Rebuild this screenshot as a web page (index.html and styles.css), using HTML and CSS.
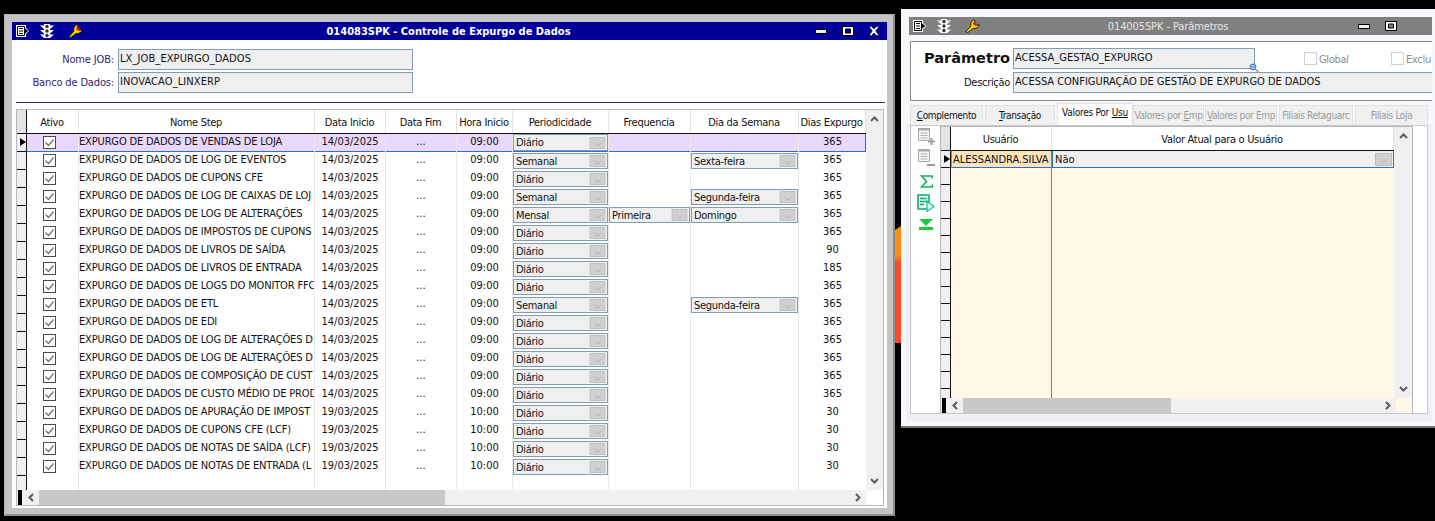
FILE: index.html
```html
<!DOCTYPE html>
<html lang="pt-BR">
<head>
<meta charset="utf-8">
<title>Expurgo de Dados</title>
<link rel="stylesheet" href="styles.css">
</head>
<body>
<svg class="defs" width="0" height="0" aria-hidden="true">
  <defs>
    <symbol id="i-doc" viewBox="0 0 13 12">
      <path d="M0 0h10v3l3 3-3 3v3H0z" fill="#fff"/>
      <path d="M1.500 1.500h7v9h-7z" fill="#fff" stroke="#000"/>
      <path d="M3 3.500h4M3 6h4M3 8.500h4" stroke="#000" stroke-width="1.200"/>
      <path d="M8.500 3l3.700 3-3.700 3z" fill="#000"/>
    </symbol>
    <symbol id="i-light" viewBox="0 0 14 14">
      <path d="M4 0h6v14H4z" fill="#fff"/>
      <path d="M0 1.500h4v3.500zM14 1.500h-4v3.500zM0 6h4v3.500zM14 6h-4v3.500zM0 10.500h4V14zM14 10.500h-4V14z" fill="#fff"/>
      <circle cx="7" cy="2.500" r="1.700" fill="#333"/><circle cx="7" cy="7" r="1.700" fill="#333"/><circle cx="7" cy="11.500" r="1.700" fill="#333"/>
    </symbol>
    <symbol id="i-key" viewBox="0 0 15 14">
      <path d="M.8 12.800L5.900 7.200C5.200 5 6.200 2 8.500.8L10 1.600 8.900 4.600 11 6.300 14.300 5.700C13.600 8.500 10.800 10 8 9.400L2.800 13.500z" fill="#ffd400" stroke="#1a1a00" stroke-width=".9"/>
      <circle cx="10" cy="4.800" r="1.700" fill="#e3141e"/>
    </symbol>
    <symbol id="i-min" viewBox="0 0 12 5"><path d="M.5.5h11v4H.5z" fill="#eee" stroke="#000"/></symbol>
    <symbol id="i-max" viewBox="0 0 12 10"><path fill-rule="evenodd" d="M.5.500h11v9H.5zM3.500 3h5v4h-5z" fill="#fff" stroke="#000"/></symbol>
    <symbol id="i-close" viewBox="0 0 12 10"><path d="M1 .5h2.500L6 3l2.500-2.500H11L7.700 5 11 9.500H8.500L6 7 3.500 9.500H1L4.300 5z" fill="#fff" stroke="#000" stroke-width=".6"/></symbol>
    <symbol id="i-drop" viewBox="0 0 17 13"><rect x=".5" y=".5" width="16" height="12" fill="#d0d0d0" stroke="#bdbdbd"/><path d="M5 6.500l3.500 3.500L12 6.500" fill="none" stroke="#aeaeae"/></symbol>
    <symbol id="i-check" viewBox="0 0 13 13"><rect x=".5" y=".5" width="12" height="12" fill="#fff" stroke="#4a4a4a"/><path d="M2.500 6.500l3 3 5-6" fill="none" stroke="#707070" stroke-width="1.200"/></symbol>
    <symbol id="i-up" viewBox="0 0 9 6"><path d="M1 5l3.500-3.500L8 5" fill="none" stroke="#5c5c5c" stroke-width="2"/></symbol>
    <symbol id="i-dn" viewBox="0 0 9 6"><path d="M1 1l3.500 3.500L8 1" fill="none" stroke="#5c5c5c" stroke-width="2"/></symbol>
    <symbol id="i-lf" viewBox="0 0 6 9"><path d="M5 1L1.500 4.500 5 8" fill="none" stroke="#5c5c5c" stroke-width="2"/></symbol>
    <symbol id="i-rt" viewBox="0 0 6 9"><path d="M1 1l3.500 3.500L1 8" fill="none" stroke="#5c5c5c" stroke-width="2"/></symbol>
  </defs>
</svg>

<section class="win win-left">
  <header class="title title-on">
    <div class="title-icons">
      <svg class="ti-doc"><use href="#i-doc"/></svg>
      <svg class="ti-light"><use href="#i-light"/></svg>
      <svg class="ti-key"><use href="#i-key"/></svg>
    </div>
    <div class="title-text">014083SPK - Controle de Expurgo de Dados</div>
    <div class="title-btns">
      <svg class="tb-min"><use href="#i-min"/></svg>
      <svg class="tb"><use href="#i-max"/></svg>
      <svg class="tb"><use href="#i-close"/></svg>
    </div>
  </header>
  <div class="win-body">
    <div class="form">
      <div class="form-row"><label class="form-label">Nome JOB:</label><div class="field">LX_JOB_EXPURGO_DADOS</div></div>
      <div class="form-row"><label class="form-label">Banco de Dados:</label><div class="field">INOVACAO_LINXERP</div></div>
    </div>
    <div class="rule"></div>
    <div class="grid-box left-grid">
      <div class="grid-main">
        <div class="gutter" id="gutter-l"></div>
        <div class="grid-cols">
          <div class="g-head">
            <div class="c c-ativo">Ativo</div><div class="c c-nome">Nome Step</div><div class="c c-ini">Data Inicio</div><div class="c c-fim">Data Fim</div><div class="c c-hora">Hora Inicio</div><div class="c c-per">Periodicidade</div><div class="c c-freq">Frequencia</div><div class="c c-dia">Dia da Semana</div><div class="c c-exp">Dias Expurgo</div>
          </div>
          <div class="g-rows" id="rows"></div>
        </div>
        <div class="vbar"><svg class="chev-v"><use href="#i-up"/></svg><svg class="chev-v"><use href="#i-dn"/></svg></div>
      </div>
      <div class="hbar">
        <i class="hbar-mark"></i>
        <span class="hchev"><svg class="chev-h"><use href="#i-lf"/></svg></span>
        <div class="hthumb left-thumb"></div>
        <span class="hspace"></span>
        <span class="hchev"><svg class="chev-h"><use href="#i-rt"/></svg></span>
        <i class="corner corner-l"></i>
      </div>
    </div>
  </div>
</section>

<section class="win win-right">
  <header class="title title-off">
    <div class="title-icons">
      <svg class="ti-doc"><use href="#i-doc"/></svg>
      <svg class="ti-light"><use href="#i-light"/></svg>
      <svg class="ti-key"><use href="#i-key"/></svg>
    </div>
    <div class="title-text">014005SPK - Parâmetros</div>
    <div class="title-btns btns-r">
      <svg class="tb-min"><use href="#i-min"/></svg>
      <svg class="tb"><use href="#i-max"/></svg>
    </div>
  </header>
  <div class="group">
    <div class="g-line">
      <div class="g-big">Parâmetro</div>
      <div class="field2 f-short">ACESSA_GESTAO_EXPURGO<svg class="lens" viewBox="0 0 10 10"><circle cx="4" cy="4" r="3" fill="#8fb6e8" stroke="#4a78b5"/><path d="M6 6l3.500 3" stroke="#b59a4a" stroke-width="1.600"/></svg></div>
      <div class="chk"><i class="box"></i><span>Global</span></div>
      <div class="chk"><i class="box"></i><span>Exclu</span></div>
    </div>
    <div class="g-line">
      <div class="g-desc">Descrição</div>
      <div class="field2 f-long">ACESSA CONFIGURAÇÃO DE GESTÃO DE EXPURGO DE DADOS</div>
    </div>
  </div>
  <nav class="tabs">
    <div class="tab t1"><u>C</u>omplemento</div>
    <div class="tab t2"><u>T</u>ransação</div>
    <div class="tab t3 active">Valores Por <u>Usu</u></div>
    <div class="tab t4 dim">Valores por <u>E</u>mp</div>
    <div class="tab t5 dim"><u>V</u>alores por Emp</div>
    <div class="tab t6 dim">Filiais Retaguarc</div>
    <div class="tab t7 dim">Filiais Loja</div>
  </nav>
  <div class="tab-page">
    <div class="side">
      <svg class="si s-add" viewBox="0 0 17 17"><path d="M.5.5h11v12H.5z" fill="#f4f4f4" stroke="#a8a8a8"/><path d="M.5 1.500h11" stroke="#a8a8a8" stroke-width="2"/><path d="M2.500 5h7M2.500 7.500h7M2.500 10h7" stroke="#b4b4b4"/><path d="M10 13.500h7M13.500 10v7" stroke="#a0a0a0" stroke-width="2"/></svg>
      <svg class="si s-del" viewBox="0 0 17 18"><path d="M.5.5h11v12H.5z" fill="#f4f4f4" stroke="#a8a8a8"/><path d="M.5 1.500h11" stroke="#a8a8a8" stroke-width="2"/><path d="M2.500 5h7M2.500 7.500h7M2.500 10h7" stroke="#b4b4b4"/><path d="M9 16h8" stroke="#9a9a9a" stroke-width="2"/></svg>
      <svg class="si s-sum" viewBox="0 0 13 13"><path d="M12.300 3.500V1H1.500l5 5.500-5 5.500h10.800V9.500" fill="none" stroke="#0fb45a" stroke-width="1.600"/></svg>
      <svg class="si s-run" viewBox="0 0 18 18"><path d="M1 1h11v14H1z" fill="#e4fff2" stroke="#16a86e" stroke-width="1.600"/><path d="M3 4.500h7M3 7.500h7M3 10.500h4" stroke="#16a86e" stroke-width="1.300"/><path d="M10 7l7 5.500-7 5z" fill="#d8fff0" stroke="#22bb88" stroke-width="1.200"/></svg>
      <svg class="si s-down" viewBox="0 0 14 11"><path d="M0 0h14L7 7z" fill="#1ecb3a"/><path d="M0 8h14v3H0z" fill="#1ecb3a"/></svg>
    </div>
    <div class="grid-box right-grid">
      <div class="grid-main">
        <div class="gutter" id="gutter-r"></div>
        <div class="grid-cols">
          <div class="g-head">
            <div class="c c-usr">Usuário</div><div class="c c-val">Valor Atual para o Usuário</div>
          </div>
          <div class="g-rows cream">
            <div class="row-r">
              <div class="c c-usr cell-usr">ALESSANDRA.SILVA</div>
              <div class="c c-val cell-val"><span class="val-text">Não</span><svg class="dd"><use href="#i-drop"/></svg></div>
            </div>
            <div class="fill-r"><i class="c-usr"></i></div>
          </div>
        </div>
        <div class="vbar"><svg class="chev-v"><use href="#i-up"/></svg><svg class="chev-v"><use href="#i-dn"/></svg></div>
      </div>
      <div class="hbar">
        <i class="hbar-mark"></i>
        <span class="hchev"><svg class="chev-h"><use href="#i-lf"/></svg></span>
        <div class="hthumb right-thumb"></div>
        <span class="hspace"></span>
        <span class="hchev"><svg class="chev-h"><use href="#i-rt"/></svg></span>
        <i class="corner corner-r"></i>
      </div>
    </div>
  </div>
</section>

<div class="sliver"></div>

<script src="app.js"></script>
</body>
</html>
```

FILE: styles.css
```css
* { box-sizing: border-box; }
html, body { margin: 0; height: 100%; }
body { background: #000; overflow: hidden; position: relative; font: 11px/13px "DejaVu Sans", sans-serif; font-stretch: condensed; color: #111; }
.defs { position: absolute; }

.win { position: absolute; display: flex; flex-direction: column; }
.win-left { left: 4px; top: 14px; width: 891px; height: 502px; padding: 7px 6px 6px 7px; background: #c4c4c4; border: 1px solid #b4b4b4; border-right: 2px solid #8d8d8d; border-bottom: 2px solid #8d8d8d; }
.win-right { left: 901px; top: 9px; width: 534px; height: 419px; padding: 8px 3px 0 8px; background: #f5f7fb; border-bottom: 2px solid #777; }

.title { flex: none; height: 18px; display: flex; align-items: center; position: relative; }
.title-on { background: #000099; color: #fff; font-weight: bold; line-height: 18px; }
.title-off { background: #808080; color: #e6e6e6; line-height: 18px; }
.title-icons { display: flex; align-items: center; padding-left: 4px; position: relative; z-index: 1; }
.ti-doc { width: 13px; height: 12px; flex: none; }
.ti-light { width: 14px; height: 14px; flex: none; margin-left: 11px; }
.ti-key { width: 15px; height: 14px; flex: none; margin-left: 14px; }
.title-text { position: absolute; left: 0; right: 0; top: 1px; padding-right: 2px; text-align: center; }
.title-off .title-text { padding-right: 5px; letter-spacing: -.1px; }
.title-btns { margin-left: auto; display: flex; align-items: center; gap: 14px; padding-right: 7px; position: relative; }
.btns-r { padding-right: 35px; }
.tb { width: 12px; height: 10px; flex: none; }
.tb-min { width: 12px; height: 5px; flex: none; margin-right: 1px; }

.win-body { flex: 1; background: #fff; display: flex; flex-direction: column; padding: 9px 2px 0 4px; min-height: 0; }
.form { display: flex; flex-direction: column; gap: 2px; flex: none; }
.form-row { display: flex; align-items: center; height: 21px; gap: 4px; }
.form-label { width: 98px; text-align: right; color: #35246e; letter-spacing: -.15px; white-space: nowrap; }
.field { width: 295px; height: 21px; background: #efefef; border: 1px solid #7f9db9; padding: 1px; color: #111; line-height: 15px; letter-spacing: .1px; }
.rule { margin-top: 9px; height: 1px; background: #3d1f78; flex: none; }

.grid-box { background: #fff; border: 1px solid #b8b8b8; display: flex; flex-direction: column; min-height: 0; }
.left-grid { margin-top: 6px; height: 397px; width: 868px; flex: none; }
.grid-main { flex: 1; display: flex; min-height: 0; }
.gutter { width: 10px; flex: none; background: #f0f0f0; border-right: 1px solid #111; display: flex; flex-direction: column; overflow: hidden; }
.gutter i { display: block; flex: none; height: 18px; border-bottom: 1px solid #111; position: relative; }
#gutter-r i { height: 17px; }
.gutter i.head, #gutter-r i.head { height: 24px; background: #e4e4e4; }
.gutter i.cur::after { content: ""; position: absolute; left: 3px; top: 4px; border-left: 6px solid #000; border-top: 4px solid transparent; border-bottom: 4px solid transparent; }
.grid-cols { flex: 1; min-width: 0; display: flex; flex-direction: column; }
.g-head { display: flex; height: 23px; flex: none; text-align: center; letter-spacing: -.3px; }
.g-head .c { line-height: 25px; padding-right: 1px; border-right: 1px solid #e2e2e2; white-space: nowrap; overflow: hidden; }
.g-rows { flex: 1; min-height: 0; border-top: 1px solid #111; position: relative; display: flex; flex-direction: column; }
.c { flex: none; }
.c-ativo { width: 52px; }
.c-nome { width: 236px; }
.c-ini { width: 71px; }
.c-fim { width: 71px; }
.c-hora { width: 56px; }
.c-per { width: 96px; }
.c-freq { width: 82px; }
.c-dia { width: 108px; }
.c-exp { width: 67px; }

.row { display: flex; height: 18px; flex: none; }
.row .c { border-right: 1px solid #e8e8e8; height: 18px; line-height: 15px; white-space: nowrap; overflow: hidden; text-align: center; }
.row .c.c-nome { text-align: left; letter-spacing: -.15px; }
.row .c.c-exp { border-right: 0; }
.row.sel { background: #e9d8fc; box-shadow: inset -1px -1px 0 #2a73c4; }
.row .c-ativo svg { width: 13px; height: 13px; margin: 2px 0 0 16px; display: block; }
.fill { flex: 1; display: flex; }
.fill i { display: block; height: 100%; border-right: 1px solid #e8e8e8; }
.combo { display: flex; align-items: center; justify-content: space-between; height: 16px; margin-top: 1px; background: #efefef; border: 1px solid #7f9db9; padding: 0 1px 0 2px; text-align: left; letter-spacing: -.3px; }
.sel .combo { margin-top: 0; height: 17px; }
.combo svg, .dd { width: 17px; height: 12px; flex: none; }
.right-grid .dd { height: 13px; }

.vbar { width: 17px; flex: none; background: #f0f0f0; display: flex; flex-direction: column; justify-content: space-between; align-items: center; padding: 6px 0; }
.right-grid .vbar { width: 18px; }
.chev-v { width: 9px; height: 6px; display: block; }
.chev-h { width: 6px; height: 9px; display: block; }
.hbar { flex: none; height: 15px; display: flex; align-items: stretch; background: #f0f0f0; }
.hbar-mark { width: 4px; margin-left: 1px; flex: none; background: #000; }
.hchev { width: 17px; flex: none; display: flex; align-items: center; justify-content: center; }
.hspace { flex: 1; }
.hthumb { background: #c8c8c8; flex: none; }
.left-thumb { width: 406px; }
.right-thumb { width: 208px; }
.corner { flex: none; display: block; }
.corner-l { width: 17px; background: #fff; }
.corner-r { width: 16px; background: #fff8e8; }

.group { flex: none; height: 60px; margin: 6px 0 0 1px; border: 1px solid #8a8a8a; border-right: 0; padding-top: 6px; display: flex; flex-direction: column; gap: 3px; background: #fff; overflow: hidden; }
.g-line { display: flex; align-items: center; height: 21px; }
.g-big { width: 102px; flex: none; text-align: right; padding-right: 3px; font: bold 14.500px/21px "DejaVu Sans", sans-serif; font-stretch: normal; }
.g-desc { width: 102px; flex: none; text-align: right; padding-right: 3px; letter-spacing: -.3px; }
.field2 { border: 1px solid #7f9db9; background: #efefef; padding: 1px; height: 21px; flex: none; position: relative; line-height: 15px; }
.f-short { width: 242px; }
.f-long { flex: 1; border-right: 0; letter-spacing: -.03px; }
.lens { position: absolute; right: -5px; bottom: -5px; width: 10px; height: 10px; }
.chk { display: flex; align-items: center; gap: 2px; color: #8a8a8a; width: 87px; flex: none; letter-spacing: -.3px; }
.chk span { padding-top: 2px; }
.f-short + .chk { margin-left: 49px; }
.box { display: block; width: 13px; height: 13px; background: #fff; border: 1px solid #cfcfcf; flex: none; }

.tabs { flex: none; display: flex; height: 22px; margin: 2px 0 0 1px; align-items: flex-end; position: relative; z-index: 1; }
.tab { flex: none; height: 20px; background: #f0f0f0; border: 1px solid #e2e2e2; border-bottom: 0; text-align: center; line-height: 19px; font-size: 10px; letter-spacing: -.35px; white-space: nowrap; overflow: hidden; }
.tab.active { height: 22px; background: #fff; line-height: 17px; letter-spacing: -.25px; }
.tab.dim { color: #9a9a9a; }
.t1 { width: 73px; }
.t2 { width: 70px; margin-left: 2px; }
.t3 { width: 76px; margin-left: 2px; }
.t4 { width: 71px; }
.t5 { width: 72px; margin-left: 1px; }
.t6 { width: 74px; margin-left: 2px; }
.t7 { width: 73px; margin-left: 2px; }

.tab-page { flex: 1; display: flex; min-height: 0; background: #fff; border: 1px solid #c8c8c8; margin: 0 4px 12px 1px; box-shadow: 0 3px 0 4px #eff0f5; }
.side { width: 29px; flex: none; display: flex; flex-direction: column; align-items: flex-start; padding: 2px 0 0 7px; }
.si { display: block; flex: none; }
.s-add { width: 17px; height: 17px; }
.s-del { width: 17px; height: 18px; margin-top: 4px; }
.s-sum { width: 13px; height: 13px; margin: 8px 0 0 2px; }
.s-run { width: 18px; height: 18px; margin: 6px 0 0 -1px; }
.s-down { width: 14px; height: 11px; margin: 7px 0 0 1px; }
.right-grid { width: 473px; flex: none; border-bottom: 0; }
.c-usr { width: 101px; display: block; }
.c-val { width: 342px; }
.row-r { display: flex; height: 17px; flex: none; }
.cream { background: #fff8e8; }
.cell-usr { background: #fbe3bb; border-right: 1px solid #7d7d7d; border-left: 1px solid #6d9ac8; border-bottom: 1px solid #2a73c4; line-height: 17px; padding-left: 1px; white-space: nowrap; overflow: hidden; }
.cell-val { background: #efefef; display: flex; justify-content: space-between; align-items: center; padding: 0 1px 0 2px; border: 1px solid #2a73c4; border-top: 0; }
.val-text { padding-top: 1px; }
.fill-r { flex: 1; }
.fill-r i { display: block; height: 100%; border-right: 1px solid #7d7d7d; }

.sliver { position: absolute; left: 895px; top: 226px; width: 6px; height: 117px; background: linear-gradient(168deg, #ff8c14 0, #ff8c14 30px, #ff4a28 36px); clip-path: polygon(0 4px, 100% 0, 100% 100%, 0 100%); }
```

FILE: app.js
```js
var data = [
  ["EXPURGO DE DADOS DE VENDAS DE LOJA","14/03/2025","09:00","Diário","","","365"],
  ["EXPURGO DE DADOS DE LOG DE EVENTOS","14/03/2025","09:00","Semanal","","Sexta-feira","365"],
  ["EXPURGO DE DADOS DE CUPONS CFE","14/03/2025","09:00","Diário","","","365"],
  ["EXPURGO DE DADOS DE LOG DE CAIXAS DE LOJ","14/03/2025","09:00","Semanal","","Segunda-feira","365"],
  ["EXPURGO DE DADOS DE LOG DE ALTERAÇÕES","14/03/2025","09:00","Mensal","Primeira","Domingo","365"],
  ["EXPURGO DE DADOS DE IMPOSTOS DE CUPONS","14/03/2025","09:00","Diário","","","365"],
  ["EXPURGO DE DADOS DE LIVROS DE SAÍDA","14/03/2025","09:00","Diário","","","90"],
  ["EXPURGO DE DADOS DE LIVROS DE ENTRADA","14/03/2025","09:00","Diário","","","185"],
  ["EXPURGO DE DADOS DE LOGS DO MONITOR FFC","14/03/2025","09:00","Diário","","","365"],
  ["EXPURGO DE DADOS DE ETL","14/03/2025","09:00","Semanal","","Segunda-feira","365"],
  ["EXPURGO DE DADOS DE EDI","14/03/2025","09:00","Diário","","","365"],
  ["EXPURGO DE DADOS DE LOG DE ALTERAÇÕES D","14/03/2025","09:00","Diário","","","365"],
  ["EXPURGO DE DADOS DE LOG DE ALTERAÇÕES D","14/03/2025","09:00","Diário","","","365"],
  ["EXPURGO DE DADOS DE COMPOSIÇÃO DE CUST","14/03/2025","09:00","Diário","","","365"],
  ["EXPURGO DE DADOS DE CUSTO MÉDIO DE PROD","14/03/2025","09:00","Diário","","","365"],
  ["EXPURGO DE DADOS DE APURAÇÃO DE IMPOST","19/03/2025","10:00","Diário","","","30"],
  ["EXPURGO DE DADOS DE CUPONS CFE (LCF)","19/03/2025","10:00","Diário","","","30"],
  ["EXPURGO DE DADOS DE NOTAS DE SAÍDA (LCF)","19/03/2025","10:00","Diário","","","30"],
  ["EXPURGO DE DADOS DE NOTAS DE ENTRADA (L","19/03/2025","10:00","Diário","","","30"]
];
function combo(t) {
  return t ? '<div class="combo"><span>' + t + '</span><svg><use href="#i-drop"/></svg></div>' : '';
}
var html = data.map(function (r, i) {
  return '<div class="row' + (i === 0 ? ' sel' : '') + '">' +
    '<div class="c c-ativo"><svg><use href="#i-check"/></svg></div>' +
    '<div class="c c-nome">' + r[0] + '</div>' +
    '<div class="c c-ini">' + r[1] + '</div>' +
    '<div class="c c-fim">...</div>' +
    '<div class="c c-hora">' + r[2] + '</div>' +
    '<div class="c c-per">' + combo(r[3]) + '</div>' +
    '<div class="c c-freq">' + combo(r[4]) + '</div>' +
    '<div class="c c-dia">' + combo(r[5]) + '</div>' +
    '<div class="c c-exp">' + r[6] + '</div></div>';
}).join('');
html += '<div class="fill"><i class="c-ativo"></i><i class="c-nome"></i><i class="c-ini"></i><i class="c-fim"></i><i class="c-hora"></i><i class="c-per"></i><i class="c-freq"></i><i class="c-dia"></i></div>';
document.getElementById('rows').innerHTML = html;
function gutter(id, n) {
  var s = '<i class="head"></i>';
  for (var i = 0; i < n; i++) s += '<i' + (i === 0 ? ' class="cur"' : '') + '></i>';
  document.getElementById(id).innerHTML = s;
}
gutter('gutter-l', 19);
gutter('gutter-r', 14);
```
